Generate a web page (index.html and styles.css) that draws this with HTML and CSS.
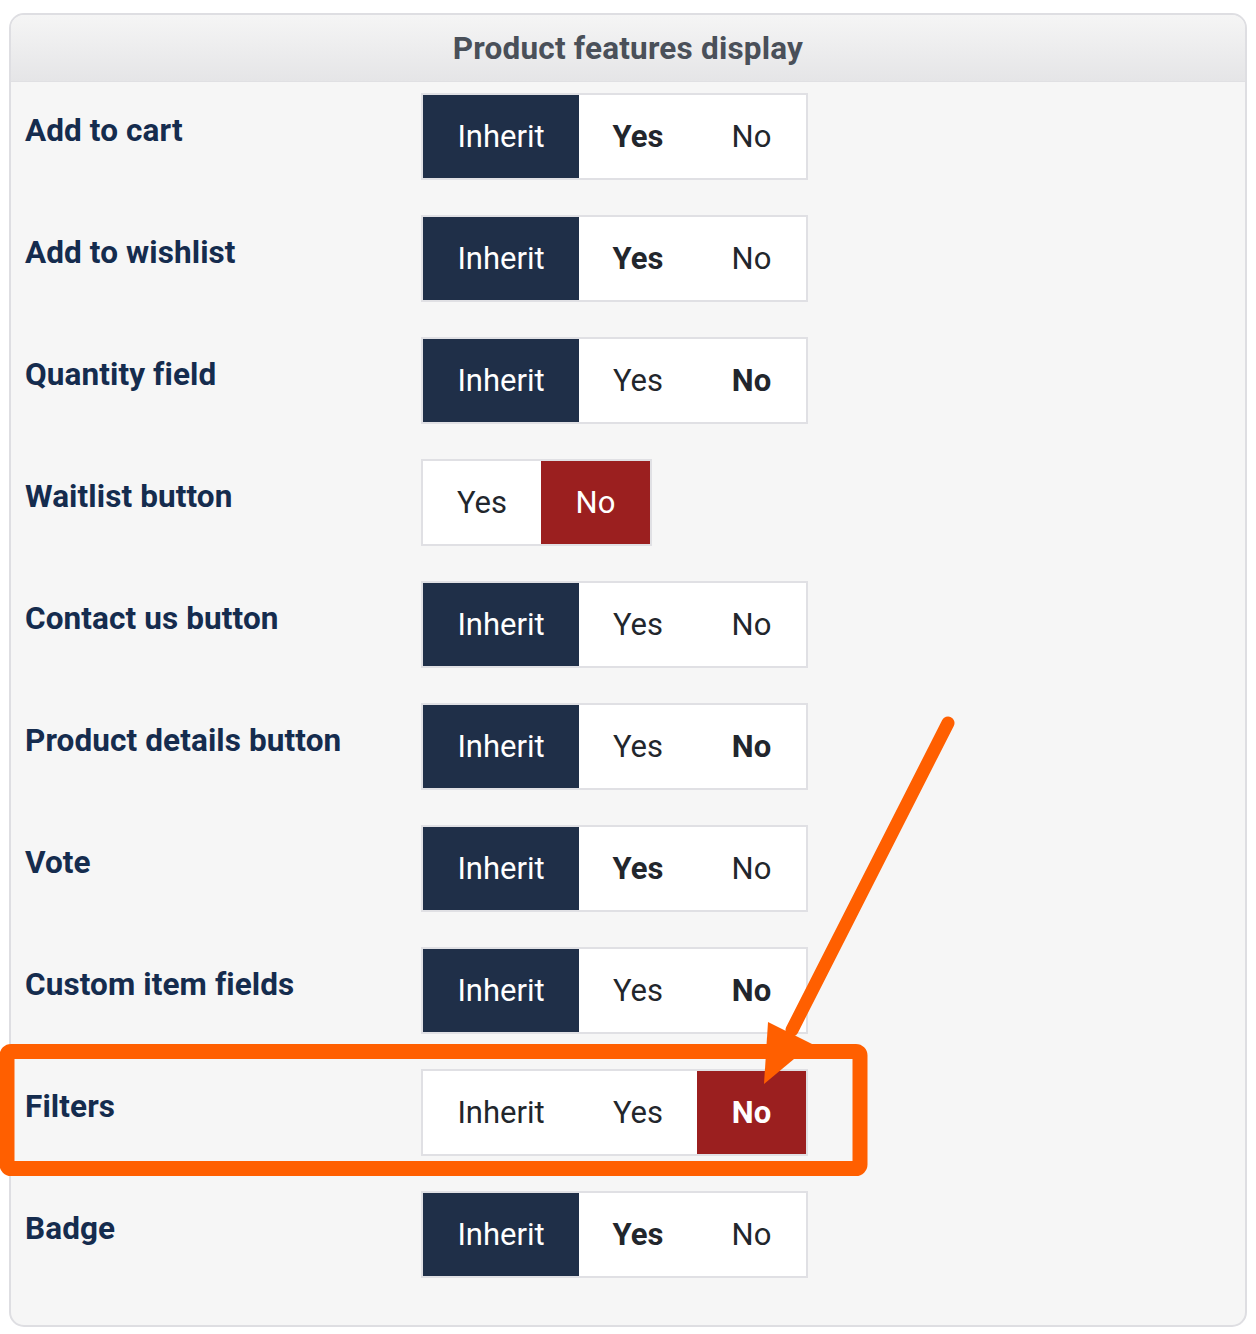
FILE: index.html
```html
<!DOCTYPE html>
<html>
<head>
<meta charset="utf-8">
<link rel="stylesheet" href="styles.css">
</head>
<body>
<div class="page">
  <section class="panel">
    <header class="panel-head">Product features display</header>
    <div class="panel-body">
      <div class="row">
        <div class="label">Add to cart</div>
        <div class="seg">
          <span class="opt w-inh active-dark">Inherit</span>
          <span class="opt w-yes bold">Yes</span>
          <span class="opt w-no">No</span>
        </div>
      </div>
      <div class="row">
        <div class="label">Add to wishlist</div>
        <div class="seg">
          <span class="opt w-inh active-dark">Inherit</span>
          <span class="opt w-yes bold">Yes</span>
          <span class="opt w-no">No</span>
        </div>
      </div>
      <div class="row">
        <div class="label">Quantity field</div>
        <div class="seg">
          <span class="opt w-inh active-dark">Inherit</span>
          <span class="opt w-yes">Yes</span>
          <span class="opt w-no bold">No</span>
        </div>
      </div>
      <div class="row">
        <div class="label">Waitlist button</div>
        <div class="seg">
          <span class="opt w-yes">Yes</span>
          <span class="opt w-no active-red">No</span>
        </div>
      </div>
      <div class="row">
        <div class="label">Contact us button</div>
        <div class="seg">
          <span class="opt w-inh active-dark">Inherit</span>
          <span class="opt w-yes">Yes</span>
          <span class="opt w-no">No</span>
        </div>
      </div>
      <div class="row">
        <div class="label">Product details button</div>
        <div class="seg">
          <span class="opt w-inh active-dark">Inherit</span>
          <span class="opt w-yes">Yes</span>
          <span class="opt w-no bold">No</span>
        </div>
      </div>
      <div class="row">
        <div class="label">Vote</div>
        <div class="seg">
          <span class="opt w-inh active-dark">Inherit</span>
          <span class="opt w-yes bold">Yes</span>
          <span class="opt w-no">No</span>
        </div>
      </div>
      <div class="row">
        <div class="label">Custom item fields</div>
        <div class="seg">
          <span class="opt w-inh active-dark">Inherit</span>
          <span class="opt w-yes">Yes</span>
          <span class="opt w-no bold">No</span>
        </div>
      </div>
      <div class="row">
        <div class="label">Filters</div>
        <div class="seg">
          <span class="opt w-inh">Inherit</span>
          <span class="opt w-yes">Yes</span>
          <span class="opt w-no active-red bold">No</span>
        </div>
      </div>
      <div class="row">
        <div class="label">Badge</div>
        <div class="seg">
          <span class="opt w-inh active-dark">Inherit</span>
          <span class="opt w-yes bold">Yes</span>
          <span class="opt w-no">No</span>
        </div>
      </div>
    </div>
  </section>
  <svg class="annotation" width="1256" height="1334" viewBox="0 0 1256 1334" xmlns="http://www.w3.org/2000/svg">
    <rect x="7" y="1051.5" width="853" height="117" rx="4" ry="4" fill="none" stroke="#ff5f00" stroke-width="15"/>
    <line x1="948" y1="723" x2="792" y2="1030" stroke="#ff5f00" stroke-width="13" stroke-linecap="round"/>
    <polygon points="764,1084 768,1022 812,1044" fill="#ff5f00"/>
  </svg>
</div>
</body>
</html>
```
FILE: styles.css
```css
html, body {
  margin: 0;
  padding: 0;
  background: #ffffff;
}
body {
  font-family: Roboto, "Liberation Sans", Arial, sans-serif;
}
.page {
  position: relative;
  width: 1256px;
  height: 1334px;
  padding: 13px 9px 0 9px;
  box-sizing: border-box;
}
.panel {
  border: 2px solid #dedee2;
  border-radius: 15px;
  background: #f6f6f6;
  overflow: hidden;
  height: 1314px;
  box-sizing: border-box;
}
.panel-head {
  height: 67px;
  background: linear-gradient(#f5f5f5, #e5e5e7);
  border-bottom: 1px solid #e0e0e3;
  display: flex;
  align-items: center;
  justify-content: center;
  font-weight: 700;
  font-size: 31.5px;
  letter-spacing: 0.2px;
  color: #4a5059;
  box-sizing: border-box;
}
.panel-body {
  padding: 11px 0 0 0;
}
.row {
  display: flex;
  height: 87px;
  margin-bottom: 35px;
}
.label {
  width: 410px;
  padding-left: 14px;
  box-sizing: border-box;
  font-weight: 700;
  font-size: 31.5px;
  letter-spacing: 0.1px;
  line-height: 40px;
  padding-top: 18px;
  color: #152c4e;
}
.seg {
  display: flex;
  border: 2px solid #e0e0e4;
  background: #ffffff;
  height: 87px;
  box-sizing: border-box;
}
.opt {
  display: flex;
  align-items: center;
  justify-content: center;
  font-size: 31px;
  color: #22262c;
}
.w-inh { width: 156px; }
.w-yes { width: 118px; }
.w-no { width: 109px; }
.bold { font-weight: 700; }
.active-dark {
  background: #1f2f48;
  color: #ffffff;
}
.active-red {
  background: #9b1f1f;
  color: #ffffff;
}
.annotation {
  position: absolute;
  left: 0;
  top: 0;
  pointer-events: none;
}
```
